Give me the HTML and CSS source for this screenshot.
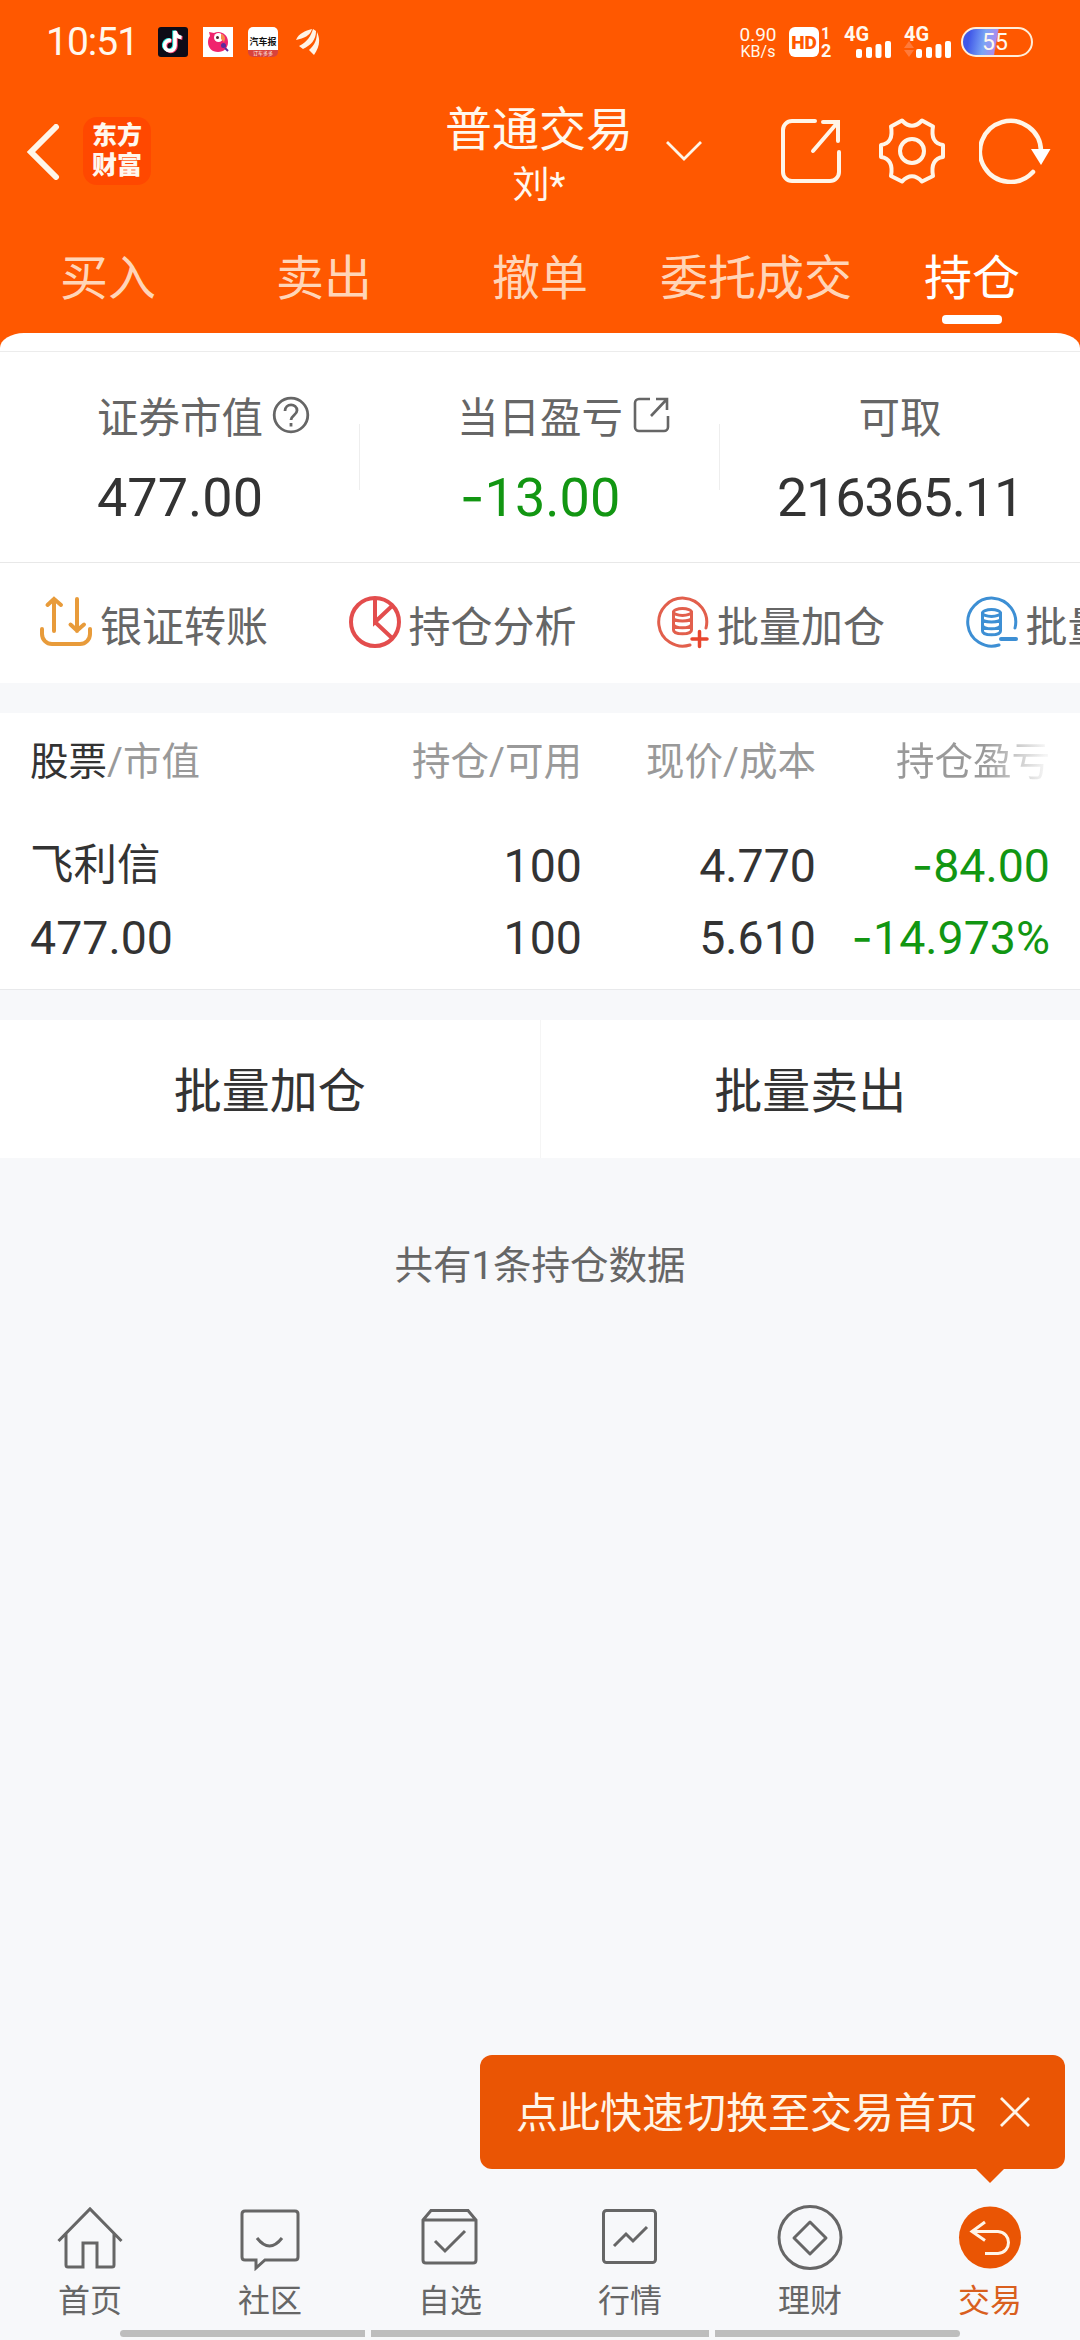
FILE: index.html
```html
<!DOCTYPE html>
<html lang="zh-CN">
<head>
  <meta charset="utf-8">
  <title>普通交易</title>
  <link rel="stylesheet" href="styles.css">
</head>
<body>
  <header class="top">
    <div class="status">
      <span class="time">10:51</span>
      <div class="apps">
        <svg width="30" height="30" viewBox="0 0 30 30">
          <rect width="30" height="30" rx="3" fill="#0d0b17"/>
          <g fill="none" stroke-width="3.6">
            <path d="M13 13.5a5.2 5.2 0 1 0 4 5V4c.5 4 3 6 6.5 6.5" stroke="#25e5df" transform="translate(-1 -.6)"/>
            <path d="M13 13.5a5.2 5.2 0 1 0 4 5V4c.5 4 3 6 6.5 6.5" stroke="#f5396a" transform="translate(1 .6)"/>
            <path d="M13 13.5a5.2 5.2 0 1 0 4 5V4c.5 4 3 6 6.5 6.5" stroke="#fff"/>
          </g>
        </svg>
        <svg width="30" height="30" viewBox="0 0 30 30">
          <rect width="30" height="30" fill="#fff"/>
          <path d="M6 5l5 1c6-3 14 1 14 9 0 6-4 10-10 10S5 21 5 15c0-3 1-5 2-6z" fill="#f0246e"/>
          <circle cx="15.5" cy="10.5" r="4.5" fill="#fff"/>
          <circle cx="14.5" cy="10.5" r="1.5" fill="#4b2730"/>
          <path d="M18 7c4 1 5 4 3 8l-3-3z" fill="#f58a4c"/>
          <circle cx="20.5" cy="18.5" r="2.5" fill="#5b2a9c"/>
          <path d="M22 21l3 3" stroke="#5b2a9c" stroke-width="2"/>
        </svg>
        <div class="car-app"><b>汽车报</b><i>订车多多</i></div>
        <svg width="24" height="28" viewBox="0 0 24 28" fill="#fff3e6">
          <path d="M0 12C3 5 9 3 16 1 14 8 8 10 0 12z"/>
          <path d="M3 18C11 14 15 8 17 1l3 2c0 9-5 14-13 18z"/>
          <path d="M13 22c6-5 8-11 8-18 4 8 2 16-3 23z"/>
        </svg>
      </div>
      <div class="signals">
        <div class="speed"><span>0.90</span><small>KB/s</small></div>
        <span class="hd">HD</span>
        <div class="sims"><span>1</span><span>2</span></div>
        <div class="net">
          <b>4G</b>
          <svg width="36" height="18" viewBox="0 0 36 18" fill="#fff"><rect y="9" width="6" height="9" rx="2"/><rect x="10" y="7" width="6" height="11" rx="2"/><rect x="19.5" y="4" width="6" height="14" rx="2"/><rect x="29" y="1" width="6" height="17" rx="2"/></svg>
        </div>
        <div class="net second">
          <b>4G</b>
          <svg width="48" height="18" viewBox="0 0 48 18" fill="#fff"><path d="M5 1l5 7H0zM5 17l5-7H0z" fill="#ff7a3a"/><rect x="12" y="9" width="6" height="9" rx="2"/><rect x="22" y="7" width="6" height="11" rx="2"/><rect x="31.5" y="4" width="6" height="14" rx="2"/><rect x="41" y="1" width="6" height="17" rx="2"/></svg>
        </div>
        <div class="battery"><span>55</span></div>
      </div>
    </div>

    <div class="titlebar">
      <svg class="back" width="34" height="56" viewBox="0 0 34 56" fill="none" stroke="#fff5e8" stroke-width="6"><path d="M30 3L5 28l25 25" stroke-linecap="round"/></svg>
      <div class="logo">东方<br>财富</div>
      <div class="title">
        <h1>普通交易</h1>
        <p>刘*</p>
      </div>
      <svg class="drop" width="38" height="22" viewBox="0 0 38 22" fill="none" stroke="#fff5e8" stroke-width="2.8"><path d="M2 2l17 17L36 2"/></svg>
      <div class="actions">
        <svg width="66" height="66" viewBox="0 0 66 66" fill="none" stroke="#fff5e8" stroke-width="4" stroke-linecap="round">
          <path d="M36 3H13A9 9 0 0 0 4 12v42a9 9 0 0 0 9 9h38a9 9 0 0 0 9-9V34"/>
          <path d="M44 4h15v19M59 4L34 33"/>
        </svg>
        <svg width="66" height="66" viewBox="0 0 66 66" fill="none" stroke="#fff5e8" stroke-width="4" stroke-linejoin="round">
          <path d="M23 2.5Q33 13 43 2.5L54 8.5Q51 25 64 27V39Q51 41 54 58L43 63.5Q33 53 23 63.5L12 58Q15 41 2 39V27Q15 25 12 8.5Z"/>
          <circle cx="33" cy="33" r="12"/>
        </svg>
        <svg width="72" height="66" viewBox="0 0 72 66">
          <path d="M54 54A30.5 30.5 0 1 1 62 33" fill="none" stroke="#fff5e8" stroke-width="4.5" stroke-linecap="round"/>
          <path d="M52 31h19.5L62 47z" fill="#fff"/>
        </svg>
      </div>
    </div>

    <nav class="tabs">
      <a>买入</a>
      <a>卖出</a>
      <a>撤单</a>
      <a>委托成交</a>
      <a class="active">持仓</a>
    </nav>
    <div class="lip"></div>
  </header>

  <section class="stats">
    <div class="stat">
      <div class="label">证券市值
        <svg width="38" height="38" viewBox="0 0 38 38" fill="none" stroke="#666" stroke-width="2.8"><circle cx="19" cy="19" r="16.8"/><path d="M13 15c0-8 12-8 12-.5 0 4.5-6 5-6 9.5"/><path d="M19 27v3.5"/></svg>
      </div>
      <div class="num">477.00</div>
    </div>
    <div class="stat">
      <div class="label">当日盈亏
        <svg width="38" height="38" viewBox="0 0 38 38" fill="none" stroke="#666" stroke-width="2.6"><path d="M18 3H7a4 4 0 0 0-4 4v24a4 4 0 0 0 4 4h25a4 4 0 0 0 4-4V20"/><path d="M24 3h11v11M35 3L19 20"/></svg>
      </div>
      <div class="num green"><i class="minus">-</i>13.00</div>
    </div>
    <div class="stat">
      <div class="label">可取</div>
      <div class="num long">216365.11</div>
    </div>
  </section>

  <section class="quick">
    <a>
      <svg width="52" height="54" viewBox="0 0 52 54" fill="none" stroke="#e89b3a" stroke-width="4" stroke-linecap="round"><path d="M14 36V4M7.5 10L14 4l7 6M37 4v32M30.5 29.5l6.5 6 7-6M2 34v5a10 10 0 0 0 10 10h28a10 10 0 0 0 10-10v-5"/></svg>
      银证转账
    </a>
    <a>
      <svg width="52" height="54" viewBox="0 0 52 54" fill="none" stroke="#e34d4d" stroke-width="4"><circle cx="26" cy="27" r="24"/><path d="M26 3v24l17-16M26 27l17 16"/></svg>
      持仓分析
    </a>
    <a>
      <svg width="52" height="54" viewBox="0 0 52 54" fill="none" stroke="#e25f4c" stroke-width="3" stroke-linecap="round"><path d="M49 33A24 24 0 1 0 33 50"/><ellipse cx="25.5" cy="17" rx="9" ry="3.5"/><path d="M16.5 17v18c0 5 18 5 18 0V17M16.5 23c0 4 18 4 18 0M16.5 29c0 5 18 5 18 0"/><path d="M35 44h15M42.5 36.5v15" stroke="#e8462e" stroke-width="3.5"/></svg>
      批量加仓
    </a>
    <a>
      <svg width="52" height="54" viewBox="0 0 52 54" fill="none" stroke="#3d8fd4" stroke-width="3" stroke-linecap="round"><path d="M49 33A24 24 0 1 0 33 50"/><ellipse cx="25.5" cy="18" rx="9" ry="3.5"/><path d="M16.5 18v18c0 5 18 5 18 0V18M16.5 24c0 4 18 4 18 0M16.5 30c0 5 18 5 18 0"/><path d="M35 44h15" stroke-width="4"/></svg>
      批量卖出
    </a>
  </section>

  <section class="holdings">
    <div class="row head">
      <span><em>股票</em>/市值</span>
      <span>持仓/可用</span>
      <span>现价/成本</span>
      <span class="fade">持仓盈亏</span>
    </div>
    <div class="row first">
      <span class="name">飞利信</span>
      <span>100</span>
      <span>4.770</span>
      <span class="green"><i class="minus">-</i>84.00</span>
    </div>
    <div class="row">
      <span>477.00</span>
      <span>100</span>
      <span>5.610</span>
      <span class="green"><i class="minus">-</i>14.973%</span>
    </div>
  </section>

  <section class="batch">
    <button>批量加仓</button>
    <button>批量卖出</button>
  </section>

  <p class="total">共有1条持仓数据</p>

  <footer>
    <div class="tip">
      <span>点此快速切换至交易首页</span>
      <svg width="32" height="32" viewBox="0 0 32 32" stroke="#fff5e8" stroke-width="2.8"><path d="M2 2l28 28M30 2L2 30"/></svg>
    </div>
    <nav class="bottom">
      <a>
        <svg width="66" height="66" viewBox="0 0 66 66"><path d="M1.5 36L33 4l31.5 32M9 29v31q0 2 2 2h15V38h14v24h15q2 0 2-2V29"/></svg>
        首页
      </a>
      <a>
        <svg width="66" height="66" viewBox="0 0 66 66"><path d="M8 6h50q3 0 3 3v43q0 3-3 3H28l-9 8v-8H8q-3 0-3-3V9q0-3 3-3M20 33q12.5 16 25 0"/></svg>
        社区
      </a>
      <a>
        <svg width="66" height="66" viewBox="0 0 66 66"><path d="M6 15l8-9.500h37l8 9.500v40q0 3-3 3H9q-3 0-3-3zM6 15h53M18 36l10 10 20-20"/></svg>
        自选
      </a>
      <a>
        <svg width="66" height="66" viewBox="0 0 66 66"><rect x="6.5" y="5.5" width="52" height="52" rx="3"/><path d="M17 41l12-12 7 7 14-14"/></svg>
        行情
      </a>
      <a>
        <svg width="66" height="66" viewBox="0 0 66 66"><circle cx="33" cy="32.5" r="31"/><path d="M33 17l16 16-16 16-16-16z" stroke-linejoin="round"/></svg>
        理财
      </a>
      <a class="active">
        <svg width="66" height="66" viewBox="0 0 66 66"><circle class="disc" cx="33" cy="32.5" r="31"/><path class="arrow" d="M28 17L15 26.500 28 35.500M15 26.500h26c14 1 14 21 0 22H28"/></svg>
        交易
      </a>
    </nav>
    <div class="bars"><i></i><i></i><i></i></div>
  </footer>
</body>
</html>
```
FILE: styles.css
```css
* {
  box-sizing: border-box;
}

body {
  margin: 0;
  width: 1080px;
  height: 2340px;
  display: flex;
  flex-direction: column;
  overflow: hidden;
  background: #f7f8fa;
  color: #333;
  font-family: Roboto, "Noto Sans CJK SC", sans-serif;
}

svg {
  display: block;
  flex: none;
}

h1, p {
  margin: 0;
  font-weight: normal;
}

.green {
  color: #129612;
}

.minus {
  font-family: Inter, sans-serif;
  font-style: normal;
  line-height: 1;
}

/* header */
.top {
  height: 348px;
  flex: none;
  background: #ff5800;
  color: #fff8ee;
}

.status {
  height: 84px;
  padding: 0 47px 0 46px;
  display: flex;
  align-items: center;
}

.time {
  width: 112px;
  font-size: 39px;
  letter-spacing: -1px;
}

.apps {
  display: flex;
  align-items: center;
  gap: 15px;
}

.apps svg:last-child {
  margin-left: 3px;
}

.car-app {
  width: 30px;
  height: 30px;
  border-radius: 5px;
  overflow: hidden;
  background: linear-gradient(#fff 76%, #d8433c 76%);
  text-align: center;
  white-space: nowrap;
}

.car-app b, .car-app i {
  display: block;
  font-style: normal;
}

.car-app b {
  margin-top: 8px;
  font-size: 9px;
  line-height: 14px;
  color: #111;
}

.car-app i {
  font-size: 5px;
  line-height: 8px;
}

.signals {
  margin-left: auto;
  height: 30px;
  display: flex;
}

.speed {
  width: 40px;
  margin-right: 11px;
  text-align: center;
  font-size: 19px;
  line-height: 15px;
}

.speed span, .speed small {
  display: block;
}

.speed small {
  font-size: 16px;
  line-height: 19px;
}

.hd {
  width: 30px;
  height: 30px;
  border-radius: 6px;
  background: #fff;
  color: #ff5800;
  font-size: 19px;
  font-weight: 900;
  line-height: 31px;
  text-align: center;
}

.sims {
  width: 12px;
  margin: 0 11px 0 2px;
  font-size: 16px;
  font-weight: bold;
  line-height: 14px;
}

.sims span {
  display: block;
}

.sims span + span {
  font-size: 18px;
  line-height: 20px;
}

.net {
  width: 49px;
  height: 30px;
  margin-right: 11px;
}

.net b {
  display: block;
  height: 13px;
  font-size: 20px;
  line-height: 15px;
}

.net svg {
  margin-left: 12px;
}

.net.second {
  width: 48px;
  margin-right: 9px;
}

.net.second svg {
  margin-left: 0;
}

.battery {
  width: 72px;
  height: 30px;
  padding-right: 4px;
  border: 2px solid #ffeeda;
  border-radius: 15px;
  background: linear-gradient(100deg, #4057e8 10%, #7aa5f5 32%, #a98df0 48%, transparent 50%);
  font-size: 23px;
  line-height: 27px;
  text-align: center;
}

.titlebar {
  height: 136px;
  padding: 0 29px 0 26px;
  display: flex;
  align-items: center;
}

.logo {
  width: 68px;
  height: 68px;
  margin: -2px 0 0 23px;
  padding-top: 4px;
  border-radius: 14px;
  background: #ff4800;
  font-size: 25px;
  font-weight: 900;
  line-height: 30px;
  text-align: center;
}

.title {
  width: 190px;
  margin-left: 293px;
  padding-top: 10px;
  text-align: center;
}

.title h1 {
  font-size: 47px;
  line-height: 58px;
}

.title p {
  font-size: 37px;
  line-height: 54px;
}

.drop {
  margin: -2px 0 0 31px;
}

.actions {
  margin: -2px 0 0 auto;
  display: flex;
  gap: 34px;
}

.tabs {
  height: 113px;
  display: grid;
  grid-template-columns: repeat(5, 1fr);
}

.tabs a {
  display: flex;
  flex-direction: column;
  align-items: center;
  font-size: 48px;
  line-height: 118px;
  color: #ffd5b8;
}

.tabs .active {
  color: #fff;
}

.tabs .active::after {
  content: "";
  width: 60px;
  height: 9px;
  margin-top: -23px;
  border-radius: 4px;
  background: #fff;
}

.lip {
  height: 15px;
  border-radius: 24px 24px 0 0 / 15px 15px 0 0;
  background: #fff;
}

/* account figures */
.stats {
  height: 215px;
  flex: none;
  display: flex;
  background: #fff;
  border-bottom: 1px solid #e8e8e8;
  position: relative;
}

.stats::before {
  content: "";
  position: absolute;
  top: 3px;
  width: 100%;
  height: 1px;
  background: #ececec;
}

.stat {
  width: 360px;
  padding-top: 37px;
  text-align: center;
  background: linear-gradient(#eee, #eee) right 76px / 1px 66px no-repeat;
}

.stat:last-child {
  background: none;
}

.label {
  height: 60px;
  display: flex;
  align-items: center;
  justify-content: center;
  gap: 9px;
  font-size: 41.5px;
  color: #666;
}

/* the icon hangs to the right of the centred label */
.label svg {
  margin: 0 -47px 0 0;
}

.num {
  font-size: 54px;
  line-height: 105px;
}

.num.long {
  letter-spacing: -1.2px;
}

/* shortcuts */
.quick {
  height: 120px;
  flex: none;
  padding-left: 40px;
  display: flex;
  overflow: hidden;
  background: #fff;
}

.quick a {
  width: 308.5px;
  flex: none;
  display: flex;
  align-items: center;
  gap: 8px;
  font-size: 42px;
  color: #666;
}

.quick svg {
  margin-top: -2px;
}

/* holdings table */
.holdings {
  height: 277px;
  flex: none;
  margin-top: 30px;
  background: #fff;
  border-bottom: 1px solid #e8e9eb;
}

.row {
  height: 72px;
  padding: 0 30px;
  display: grid;
  grid-template-columns: 318px 234px 234px 234px;
  align-items: center;
  font-size: 46.5px;
  line-height: 72px;
  text-align: right;
}

.row span:first-child {
  text-align: left;
}

.row .name {
  font-size: 43.5px;
}

.head {
  height: 98px;
  font-size: 38.5px;
  color: #999;
}

.head em {
  font-style: normal;
  color: #333;
}

.head .fade {
  color: transparent;
  background: linear-gradient(90deg, #999 72%, #f5f5f5 98%);
  -webkit-background-clip: text;
  background-clip: text;
}

.first {
  margin-top: 19px;
}

.batch {
  height: 138px;
  flex: none;
  margin-top: 30px;
  display: flex;
  background: #fff;
}

.batch button {
  flex: 1;
  padding: 0 0 4px;
  border: 0;
  background: none;
  font: 48px Roboto, "Noto Sans CJK SC", sans-serif;
  color: #333;
}

.batch button + button {
  border-left: 1px solid #f5f5f5;
}

.total {
  margin-top: 78px;
  font-size: 38.5px;
  line-height: 60px;
  text-align: center;
  color: #666;
}

/* bottom area */
footer {
  margin-top: auto;
}

.tip {
  position: relative;
  width: 585px;
  height: 114px;
  margin: 0 15px 36px auto;
  padding: 0 34px 0 36px;
  display: flex;
  align-items: center;
  justify-content: space-between;
  border-radius: 12px;
  background: #ea5504;
  color: #fff5e8;
  font-size: 42px;
  white-space: nowrap;
}

.tip span {
  padding-bottom: 6px;
}

.tip::after {
  content: "";
  position: absolute;
  left: 495px;
  top: 113px;
  border: 15px solid transparent;
  border-top-color: #ea5504;
  border-bottom: 0;
}

.bottom {
  height: 125px;
  display: grid;
  grid-template-columns: repeat(6, 180px);
}

.bottom a {
  display: flex;
  flex-direction: column;
  align-items: center;
  font-size: 32px;
  line-height: 60px;
  color: #666;
}

.bottom svg {
  fill: none;
  stroke: #666;
  stroke-width: 3;
}

.bottom .active {
  color: #d95f1e;
}

.bottom .disc {
  fill: #ea5504;
  stroke: none;
}

.bottom .arrow {
  stroke: #fff5e8;
}

.bars {
  height: 10px;
  padding: 0 120px;
  display: grid;
  grid-template-columns: 245px 338px 245px;
  gap: 6px;
}

.bars i {
  height: 7px;
  background: #bdbdbd;
}

.bars i:first-child {
  border-radius: 4px 0 0 4px;
}

.bars i:last-child {
  border-radius: 0 4px 4px 0;
}
```
